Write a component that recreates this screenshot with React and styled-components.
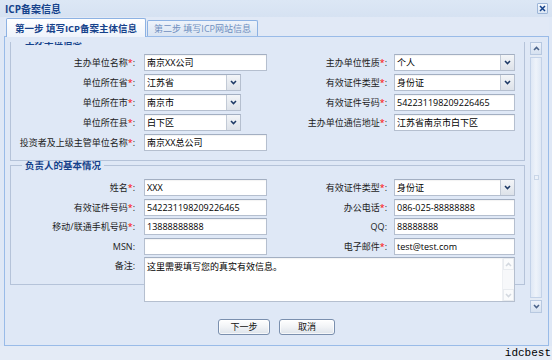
import React from 'react';
import styled, { createGlobalStyle, css } from 'styled-components';

const FONT = `"Open Sans", "Noto Sans CJK SC", sans-serif`;
const CJK = `"Noto Sans CJK SC", sans-serif`;

const Global = createGlobalStyle`
  html, body { margin: 0; padding: 0; }
  body { width: 552px; height: 360px; overflow: hidden; background: #e6edf7; font-family: ${FONT}; }
  * { box-sizing: border-box; }
`;

const Page = styled.div`
  width: 552px;
  height: 360px;
  display: flex;
  flex-direction: column;
`;

const Window = styled.div`
  height: 346px;
  display: flex;
  flex-direction: column;
  padding: 0 3px 0 4px;
  background: linear-gradient(#dce7f5, #d6e2f2 17px, #dfe8f6 17px);
`;

const TitleBar = styled.div`
  height: 17px;
  display: flex;
  align-items: center;
  justify-content: space-between;
  padding-left: 1px;
`;

const Title = styled.div`
  font-size: 10px;
  font-weight: bold;
  color: #15428b;
  line-height: 12px;
`;

const CloseButton = styled.div`
  width: 11px;
  height: 11px;
  margin-right: 1px;
  border: 1px solid #9db6d8;
  border-radius: 1px;
  background: linear-gradient(#f4f8fd, #dbe6f4);
  display: flex;
  align-items: center;
  justify-content: center;
`;

const TabStrip = styled.div`
  height: 20px;
  display: flex;
  align-items: flex-end;
  gap: 1px;
  padding-left: 2px;
  border-bottom: 1px solid #99bbe8;
  background: #e1e9f6;
`;

const Tab = styled.div`
  display: flex;
  align-items: center;
  justify-content: center;
  width: ${(p) => p.$w}px;
  border: 1px solid #8db2e3;
  border-bottom: none;
  border-radius: 2px 2px 0 0;
  white-space: nowrap;
  ${(p) =>
    p.$active
      ? css`
          height: 19px;
          margin-bottom: -1px;
          background: linear-gradient(#ffffff, #eef3fb);
          font-size: 9.5px;
          font-weight: bold;
          color: #15428b;
        `
      : css`
          height: 16px;
          background: linear-gradient(#eef3fa, #d9e4f3);
          font-size: 9px;
          color: #6f8fbf;
        `}
`;

const TabBody = styled.div`
  flex: 1;
  display: flex;
  flex-direction: column;
  border: 1px solid #99bbe8;
  border-top: none;
  background: #dfe8f6;
  padding-top: 5px;
`;

const ScrollRow = styled.div`
  height: 272px;
  display: flex;
  gap: 5px;
  padding-left: 5px;
`;

const Viewport = styled.div`
  width: 515px;
  height: 272px;
  overflow: hidden;
`;

/* the form is scrolled down: its scroll offset hides the top of the first fieldset */
const ScrolledContent = styled.div`
  margin-top: -${(p) => p.$scroll}px;
`;

const FieldSet = styled.fieldset`
  margin: 0;
  min-width: 0;
  border: 1px solid #b5c3d9;
  padding: 9px 0 ${(p) => p.$pb}px 0;
`;

const Legend = styled.legend`
  margin-left: 11px;
  padding: 0 3px;
  height: ${(p) => p.$lh}px;
  font-family: ${CJK};
  font-size: 9.5px;
  font-weight: bold;
  color: #15428b;
  line-height: ${(p) => p.$lh}px;
`;

const FormGrid = styled.div`
  display: grid;
  grid-template-columns: 133px 123px 127px 121px;
  grid-auto-rows: 17px;
  row-gap: ${(p) => p.$gap}px;
`;

const Label = styled.label`
  text-align: right;
  padding-right: ${(p) => p.$gap}px;
  font-size: 9px;
  line-height: 17px;
  height: 17px;
  color: #1c1c1c;
  white-space: nowrap;
`;

const Star = styled.span`
  color: #ff0000;
`;

const fieldBox = css`
  height: 17px;
  border: 1px solid #b5bfcf;
  border-top-color: #a3afc2;
  background: #fff;
  box-shadow: inset 0 1px 1px rgba(0, 0, 0, 0.05);
`;

const Input = styled.input`
  ${fieldBox};
  display: block;
  width: 100%;
  padding: 0 2px;
  font-family: ${FONT};
  font-size: 9px;
  color: #000;
  outline: none;
`;

const Combo = styled.div`
  ${fieldBox};
  width: ${(p) => (p.$w ? `${p.$w}px` : '100%')};
  display: flex;
`;

const ComboValue = styled.div`
  flex: 1;
  padding: 0 2px;
  font-size: 9px;
  line-height: 15px;
  color: #000;
`;

const Trigger = styled.div`
  width: 14px;
  border-left: 1px solid #c2cad6;
  background: linear-gradient(#f3f5f8, #dde2e9);
  display: flex;
  align-items: center;
  justify-content: center;
`;

const AreaBox = styled.div`
  ${fieldBox};
  grid-column: 2 / span 3;
  height: 45px;
  display: flex;
`;

const TextArea = styled.textarea`
  flex: 1;
  border: none;
  resize: none;
  overflow: hidden;
  outline: none;
  background: transparent;
  padding: 3px 2px;
  font-family: ${FONT};
  font-size: 9px;
  line-height: 12px;
  color: #000;
`;

const FaintBar = styled.div`
  width: 12px;
  display: flex;
  flex-direction: column;
  justify-content: space-between;
  background: #f7f8fa;
  border-left: 1px solid #eef0f3;
`;

const FaintArrow = styled.div`
  height: 12px;
  display: flex;
  align-items: center;
  justify-content: center;
  border: 1px solid #e8ebef;
  background: #fafbfc;
`;

const VScroll = styled.div`
  width: 12px;
  height: 271px;
  display: flex;
  flex-direction: column;
  background: #e4ebf5;
`;

const ScrollArrow = styled.div`
  height: 13px;
  display: flex;
  align-items: center;
  justify-content: center;
  border: 1px solid #b7c8e0;
  background: linear-gradient(#edf2fa, #d6e1f0);
`;

const Track = styled.div`
  flex: 1;
  display: flex;
  padding: 2px 0;
`;

const Thumb = styled.div`
  flex: 1;
  display: flex;
  align-items: center;
  justify-content: center;
  border: 1px solid #c3d2e8;
  background: linear-gradient(90deg, #dfe8f5, #eef3fa 50%, #dfe8f5);
`;

const Grip = styled.div`
  width: 5px;
  height: 5px;
  border: 1px solid #c9d6e8;
`;

const Footer = styled.div`
  flex: 1;
  display: flex;
  justify-content: center;
  align-items: flex-start;
  gap: 9px;
  padding-top: 5px;
`;

const Button = styled.button`
  width: ${(p) => p.$w}px;
  height: 16px;
  padding: 0;
  border: 1px solid #7a8fae;
  border-radius: 3px;
  background: linear-gradient(#ffffff, #f1f3f6 50%, #dde3ea);
  box-shadow: inset 0 0 0 1px rgba(255, 255, 255, 0.7);
  font-family: ${FONT};
  font-size: 9px;
  line-height: 14px;
  color: #111;
`;

const WatermarkBar = styled.div`
  flex: 1;
  display: flex;
  justify-content: flex-end;
  align-items: center;
  background: #e4ebf6;
`;

const Watermark = styled.div`
  font-family: "Liberation Mono", monospace;
  font-size: 11px;
  line-height: 12px;
  color: #000;
  padding-right: 1px;
`;

const ChevronDown = ({ color = '#1e3a66' }) => (
  <svg width="7" height="5" viewBox="0 0 7 5">
    <polyline points="1,1 3.5,3.6 6,1" fill="none" stroke={color} strokeWidth="1.5" />
  </svg>
);

const ChevronUp = ({ color = '#4a6289' }) => (
  <svg width="7" height="5" viewBox="0 0 7 5">
    <polyline points="1,4 3.5,1.4 6,4" fill="none" stroke={color} strokeWidth="1.5" />
  </svg>
);

const section1 = [
  [
    { label: '主办单位名称', req: true, type: 'input', value: '南京XX公司' },
    { label: '主办单位性质', req: true, type: 'select', value: '个人' },
  ],
  [
    { label: '单位所在省', req: true, type: 'select', value: '江苏省', w: 97 },
    { label: '有效证件类型', req: true, type: 'select', value: '身份证' },
  ],
  [
    { label: '单位所在市', req: true, type: 'select', value: '南京市', w: 97 },
    { label: '有效证件号码', req: true, type: 'input', value: '542231198209226465' },
  ],
  [
    { label: '单位所在县', req: true, type: 'select', value: '白下区', w: 97 },
    { label: '主办单位通信地址', req: true, type: 'input', value: '江苏省南京市白下区' },
  ],
  [{ label: '投资者及上级主管单位名称', req: true, type: 'input', value: '南京XX总公司' }, null],
];

const section2 = [
  [
    { label: '姓名', req: true, type: 'input', value: 'XXX' },
    { label: '有效证件类型', req: true, type: 'select', value: '身份证' },
  ],
  [
    { label: '有效证件号码', req: true, type: 'input', value: '542231198209226465' },
    { label: '办公电话', req: true, type: 'input', value: '086-025-88888888' },
  ],
  [
    { label: '移动/联通手机号码', req: true, type: 'input', value: '13888888888' },
    { label: 'QQ', req: false, type: 'input', value: '88888888' },
  ],
  [
    { label: 'MSN', req: false, type: 'input', value: '' },
    { label: '电子邮件', req: true, type: 'input', value: 'test@test.com' },
  ],
];

function Field({ f, gap }) {
  if (!f) return null;
  return (
    <>
      <Label $gap={gap}>
        {f.label}
        {f.req && <Star>*</Star>}:
      </Label>
      {f.type === 'input' ? (
        <Input defaultValue={f.value} readOnly />
      ) : (
        <div>
          <Combo $w={f.w}>
            <ComboValue>{f.value}</ComboValue>
            <Trigger>
              <ChevronDown />
            </Trigger>
          </Combo>
        </div>
      )}
    </>
  );
}

function Rows({ rows }) {
  return rows.map((r, i) => (
    <React.Fragment key={i}>
      <Field f={r[0]} gap={9} />
      <Field f={r[1]} gap={7} />
    </React.Fragment>
  ));
}

export default function App() {
  return (
    <Page>
      <Global />
      <Window>
        <TitleBar>
          <Title>ICP备案信息</Title>
          <CloseButton>
            <svg width="7" height="7" viewBox="0 0 7 7">
              <path d="M1 1 L6 6 M6 1 L1 6" stroke="#15428b" strokeWidth="1.5" />
            </svg>
          </CloseButton>
        </TitleBar>
        <TabStrip>
          <Tab $active $w={140}>第一步 填写ICP备案主体信息</Tab>
          <Tab $w={111}>第二步 填写ICP网站信息</Tab>
        </TabStrip>
        <TabBody>
          <ScrollRow>
            <Viewport>
              <ScrolledContent $scroll={7}>
                <FieldSet $pb={9}>
                  <Legend $lh={10}>主办单位信息</Legend>
                  <FormGrid $gap={3}>
                    <Rows rows={section1} />
                  </FormGrid>
                </FieldSet>
                <FieldSet $pb={10}>
                  <Legend $lh={9}>负责人的基本情况</Legend>
                  <FormGrid $gap={2.5}>
                    <Rows rows={section2} />
                    <Label $gap={9}>备注:</Label>
                    <AreaBox>
                      <TextArea defaultValue="这里需要填写您的真实有效信息。" readOnly />
                      <FaintBar>
                        <FaintArrow>
                          <ChevronUp color="#d3d8df" />
                        </FaintArrow>
                        <FaintArrow>
                          <ChevronDown color="#d3d8df" />
                        </FaintArrow>
                      </FaintBar>
                    </AreaBox>
                  </FormGrid>
                </FieldSet>
              </ScrolledContent>
            </Viewport>
            <VScroll>
              <ScrollArrow>
                <ChevronUp />
              </ScrollArrow>
              <Track>
                <Thumb>
                  <Grip />
                </Thumb>
              </Track>
              <ScrollArrow>
                <ChevronDown color="#4a6289" />
              </ScrollArrow>
            </VScroll>
          </ScrollRow>
          <Footer>
            <Button $w={52}>下一步</Button>
            <Button $w={56}>取消</Button>
          </Footer>
        </TabBody>
      </Window>
      <WatermarkBar>
        <Watermark>idcbest</Watermark>
      </WatermarkBar>
    </Page>
  );
}
